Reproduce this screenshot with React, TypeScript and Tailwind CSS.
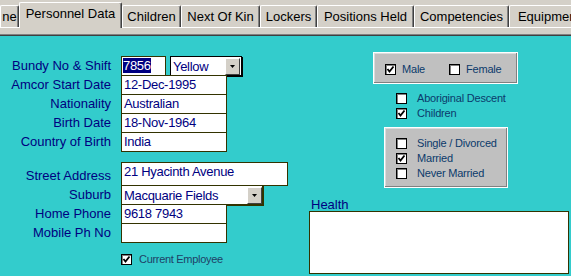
import type { ReactNode } from 'react';

const tabs = [
  { label: 'ne', w: 'w-[19px]', active: false },
  { label: 'Personnel Data', w: 'w-[103px]', active: true },
  { label: 'Children', w: 'w-[59px]', active: false },
  { label: 'Next Of Kin', w: 'w-[79px]', active: false },
  { label: 'Lockers', w: 'w-[57px]', active: false },
  { label: 'Positions Held', w: 'w-[97px]', active: false },
  { label: 'Competencies', w: 'w-[95px]', active: false },
  { label: 'Equipment', w: 'w-[80px]', active: false },
];

function Tab({ label, w, active }: { label: string; w: string; active: boolean }) {
  if (active) {
    return (
      <div
        className={`${w} relative z-10 -mb-px flex h-[26px] shrink-0 items-start justify-center overflow-hidden whitespace-nowrap rounded-t-[2px] border-l border-t border-r border-l-white border-t-white border-r-[#404040] bg-[#d4d0c8] pt-[1px] text-black shadow-[inset_-1px_0_0_#808080]`}
      >
        {label}
      </div>
    );
  }
  return (
    <div
      className={`${w} flex h-[22px] shrink-0 items-center justify-center overflow-hidden whitespace-nowrap rounded-t-[2px] border-l border-t border-r border-l-white border-t-white border-r-[#404040] bg-[#d4d0c8] pt-[1px] text-black shadow-[inset_-1px_0_0_#808080]`}
    >
      {label}
    </div>
  );
}

function Check({ checked }: { checked?: boolean }) {
  return (
    <span className="flex h-[11px] w-[11px] shrink-0 items-center justify-center border border-black bg-white shadow-[inset_1px_1px_0_#808080]">
      {checked && (
        <svg width="9" height="9" viewBox="0 0 9 9">
          <polyline points="1.5,4 3.5,6.5 7.5,1.5" fill="none" stroke="black" strokeWidth="1.8" />
        </svg>
      )}
    </span>
  );
}

function DropButton() {
  return (
    <span className="flex h-[17px] w-[15px] shrink-0 items-center justify-center border border-l-white border-t-white border-r-[#404040] border-b-[#404040] bg-[#d4d0c8]">
      <svg width="5" height="3" viewBox="0 0 5 3">
        <polygon points="0,0 5,0 2.5,3" fill="black" />
      </svg>
    </span>
  );
}

function Row({ label, children, h = 'h-[19px]', align = 'items-start' }: { label: string; children: ReactNode; h?: string; align?: string }) {
  return (
    <div className={`flex ${h} ${align}`}>
      <div className="w-[111px] shrink-0 whitespace-nowrap text-right leading-[19px] text-[#000080]">{label}</div>
      <div className="ml-[10px] flex tracking-[-0.3px]">{children}</div>
    </div>
  );
}

function Field({ value, w = 'w-[106px]', h = 'h-[20px]' }: { value: string; w?: string; h?: string }) {
  return (
    <div className={`${w} ${h} border border-[#333300] bg-white pl-[2px] leading-[17px] text-[#000080]`}>
      {value}
    </div>
  );
}

function CheckRow({ label, checked }: { label: string; checked?: boolean }) {
  return (
    <div className="flex h-[15px] items-center">
      <Check checked={checked} />
      <span className="ml-[10px] text-[11px] tracking-[-0.2px] text-[#0b3a6b]">{label}</span>
    </div>
  );
}

export default function App() {
  return (
    <div
      className="h-[276px] w-[571px] overflow-hidden bg-[#33cccc] text-[13px]"
      style={{ fontFamily: '"Liberation Sans", Arial, sans-serif' }}
    >
      {/* tab strip */}
      <div className="bg-[#d4d0c8]">
        <div className="flex h-[27px] items-end">
          {tabs.map((t) => (
            <Tab key={t.label} {...t} />
          ))}
        </div>
        <div className="h-[7px] border-t border-white" />
        <div className="h-px bg-[#808080]" />
        <div className="h-px bg-[#404040]" />
      </div>

      <div className="flex">
        {/* left column */}
        <div className="w-[309px] shrink-0 pt-[20px]">
          <Row label="Bundy No & Shift">
            <div className="h-[20px] w-[45px] border border-[#333300] bg-white pl-[1px] leading-[17px]">
              <span className="bg-[#000080] text-white">7856</span>
            </div>
            <div className="ml-[4px] flex h-[20px] w-[72px] items-center border border-black bg-white pl-[2px] pr-[1px] leading-[17px] text-[#000080] shadow-[1px_1px_0_#000]">
              <span className="flex-1">Yellow</span>
              <DropButton />
            </div>
          </Row>
          <Row label="Amcor Start Date">
            <Field value="12-Dec-1995" />
          </Row>
          <Row label="Nationality">
            <Field value="Australian" />
          </Row>
          <Row label="Birth Date">
            <Field value="18-Nov-1964" />
          </Row>
          <Row label="Country of Birth">
            <Field value="India" />
          </Row>

          <div className="mt-[11px]">
            <Row label="Street Address" h="h-[23px]" align="items-end">
              <div className="mb-[-1px] self-start">
                <Field value="21 Hyacinth Avenue" w="w-[167px]" h="h-[24px]" />
              </div>
            </Row>
            <Row label="Suburb">
              <div className="flex h-[20px] w-[142px] items-center border border-[#333300] bg-white pl-[2px] leading-[17px] text-[#000080] shadow-[1px_1px_0_#333300]">
                <span className="flex-1">Macquarie Fields</span>
                <DropButton />
              </div>
            </Row>
            <Row label="Home Phone">
              <Field value="9618 7943" />
            </Row>
            <Row label="Mobile Ph No">
              <Field value="" />
            </Row>
          </div>

          <div className="ml-[121px] mt-[10px] flex h-[15px] items-center">
            <Check checked />
            <span className="ml-[7px] text-[11px] tracking-[-0.3px] text-[#1f3f66]">Current Employee</span>
          </div>
        </div>

        {/* right column */}
        <div className="flex flex-col pt-[16px]">
          <div className="ml-[64px] flex h-[32px] w-[145px] items-center border border-white bg-[#c0c0c0] pl-[11px] pt-[2px] shadow-[inset_-1px_-1px_0_#808080,inset_1px_1px_0_#dcdcdc]">
            <Check checked />
            <span className="ml-[6px] text-[11px] tracking-[-0.2px] text-[#0b3a6b]">Male</span>
            <span className="ml-[24px] flex items-center">
              <Check />
              <span className="ml-[6px] text-[11px] tracking-[-0.2px] text-[#0b3a6b]">Female</span>
            </span>
          </div>

          <div className="ml-[87px] mt-[7px] flex flex-col">
            <CheckRow label="Aboriginal Descent" />
            <CheckRow label="Children" checked />
          </div>

          <div className="ml-[75px] mt-[6px] flex h-[61px] w-[124px] flex-col border border-white bg-[#c0c0c0] pl-[11px] pt-[8px] shadow-[inset_-1px_-1px_0_#808080,inset_1px_1px_0_#dcdcdc]">
            <CheckRow label="Single / Divorced" />
            <CheckRow label="Married" checked />
            <CheckRow label="Never Married" />
          </div>

          <div className="ml-[2px] mt-[10px] h-[13px] leading-[13px] text-[#000080]">Health</div>
          <div className="h-[63px] w-[260px] border border-[#333300] bg-white" />
        </div>
      </div>
    </div>
  );
}
